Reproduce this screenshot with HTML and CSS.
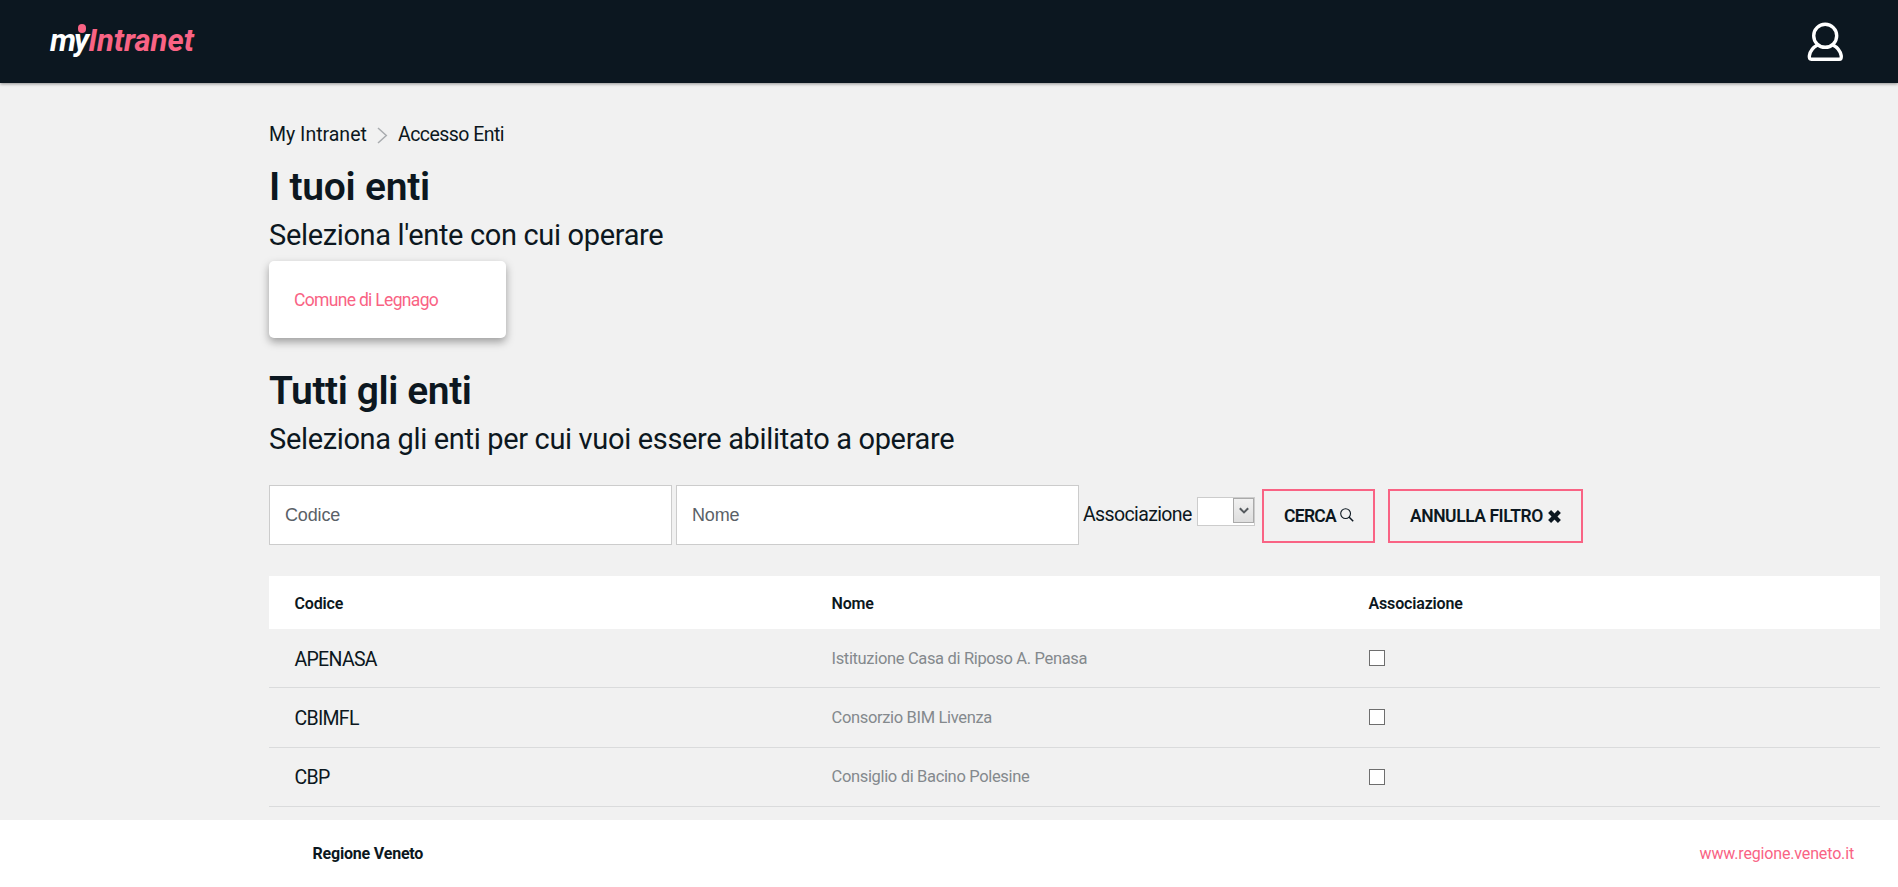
FILE: index.html
```
<!DOCTYPE html>
<html lang="it">
<head>
<meta charset="utf-8">
<title>MyIntranet - Accesso Enti</title>
<link rel="stylesheet" href="styles.css">
</head>
<body>
<header class="topbar">
  <a class="logo"><span class="logo-my">my</span><span class="logo-name">Intranet</span><i class="logo-dot"></i></a>
  <svg class="user-icon" width="38" height="42" viewBox="0 0 38 42" fill="none" stroke="#fff" stroke-width="3.4" stroke-linejoin="round">
    <circle cx="19.2" cy="15.8" r="11.5"/>
    <path d="M11.5 25C7.6 27 4.2 31 3.4 35.600C3 38 3.700 39.300 5.500 39.300H33.200C35 39.300 35.600 38 35.200 35.600C34.300 31 30.900 27 26.900 25"/>
  </svg>
</header>

<main class="content">
  <nav class="breadcrumb">
    <span class="crumb-home">My Intranet</span>
    <svg width="11" height="17" viewBox="0 0 11 17" fill="none" stroke="#a9acaf" stroke-width="1.5"><path d="M1 1L9.300 8.500L1 16"/></svg>
    <span class="crumb-page">Accesso Enti</span>
  </nav>

  <h1 class="title title-mine">I tuoi enti</h1>
  <p class="subtitle">Seleziona l'ente con cui operare</p>
  <a class="ente-card">Comune di Legnago</a>

  <h1 class="title title-all">Tutti gli enti</h1>
  <p class="subtitle subtitle-all">Seleziona gli enti per cui vuoi essere abilitato a operare</p>

  <form class="filters">
    <input class="field" type="text" placeholder="Codice">
    <input class="field" type="text" placeholder="Nome">
    <label class="assoc-label">Associazione</label>
    <span class="select"><span class="select-btn"><svg width="10" height="8" viewBox="0 0 10 8" fill="none" stroke="#555a5e" stroke-width="2"><path d="M.8 1.200L5 5.400L9.200 1.200"/></svg></span></span>
    <button class="btn btn-search" type="button">CERCA<svg width="14" height="14" viewBox="0 0 14 14" fill="none" stroke="#0c1720"><circle cx="5.600" cy="5.600" r="4.900" stroke-width="1.100"/><path d="M9.200 9.200L13.200 13.200" stroke-width="1.500"/></svg></button>
    <button class="btn btn-reset" type="button">ANNULLA FILTRO<svg width="13" height="13" viewBox="0 0 13 13" stroke="#0c1720" stroke-width="4.200"><path d="M1.600 1.600L11.400 11.400M11.400 1.600L1.600 11.400"/></svg></button>
  </form>

  <section class="table">
    <div class="row head"><span>Codice</span><span>Nome</span><span>Associazione</span></div>
    <div class="row"><span class="code">APENASA</span><span class="name">Istituzione Casa di Riposo A. Penasa</span><span><i class="check"></i></span></div>
    <div class="row"><span class="code">CBIMFL</span><span class="name">Consorzio BIM Livenza</span><span><i class="check"></i></span></div>
    <div class="row"><span class="code">CBP</span><span class="name">Consiglio di Bacino Polesine</span><span><i class="check"></i></span></div>
  </section>
</main>

<footer class="footer">
  <strong>Regione Veneto</strong>
  <a class="site-link">www.regione.veneto.it</a>
</footer>
</body>
</html>
```
FILE: styles.css
```
* { box-sizing: border-box; }

body {
  margin: 0;
  height: 100vh;
  overflow: hidden;
  display: flex;
  flex-direction: column;
  background: #f1f1f1;
  color: #0c1720;
  font-family: Roboto, "Open Sans", sans-serif;
}

.topbar {
  flex: none;
  height: 83px;
  padding: 0 54px 0 50px;
  display: flex;
  justify-content: space-between;
  background: #0c1720;
  box-shadow: 0 1px 3px rgba(0, 0, 0, .4);
}

.logo {
  position: relative;
  margin-top: 21px;
  height: 40px;
  line-height: 40px;
  font-size: 31px;
  font-weight: 700;
  font-style: italic;
  white-space: nowrap;
}
.logo-my { color: #fff; letter-spacing: -2px; margin-right: 1px; }
.logo-name { color: #f96384; }
.logo-dot {
  position: absolute;
  left: 27.5px;
  top: 3px;
  width: 8.5px;
  height: 8.5px;
  border-radius: 50%;
  background: #f96384;
}
.user-icon { margin-top: 20px; }

.content {
  flex: 1;
  min-height: 0;
  padding: 36px 18px 0 269px;
}

.breadcrumb {
  display: flex;
  align-items: center;
  height: 30px;
  font-size: 19.5px;
}
.breadcrumb svg { margin: 3px 10px 0 9px; }
.crumb-home { width: 99px; }
.crumb-page { letter-spacing: -.55px; }

.title {
  margin: 18px 0 0;
  font-size: 39px;
  line-height: 40px;
  font-weight: 600;
  letter-spacing: -.25px;
}
.title-all { margin-top: 33px; letter-spacing: -.42px; }

.subtitle {
  margin: 9px 0 0;
  font-size: 29px;
  line-height: 38px;
  letter-spacing: -.34px;
}

.ente-card {
  display: flex;
  align-items: center;
  width: 237px;
  height: 77px;
  margin-top: 7px;
  padding-left: 25px;
  border-radius: 5px;
  background: #fff;
  color: #f96384;
  font-size: 17.5px;
  letter-spacing: -.68px;
  box-shadow: 0 4px 8px rgba(0, 0, 0, .35);
}

.filters {
  display: flex;
  align-items: center;
  height: 60px;
  margin-top: 27px;
}
.field {
  width: 403px;
  height: 60px;
  margin-right: 4px;
  padding: 0 15px;
  border: 1px solid #ccc;
  border-radius: 0;
  background: #fff;
  font-family: "Liberation Sans", Arial, sans-serif;
  font-size: 18px;
}
.field::placeholder { color: #5a6167; opacity: 1; letter-spacing: -.15px; }
.assoc-label { width: 114px; margin-bottom: 1px; font-size: 19.5px; letter-spacing: -.62px; }
.select {
  display: flex;
  justify-content: flex-end;
  width: 58px;
  height: 29px;
  margin: 0 7px 7px 0;
  border: 1px solid #ccc;
  background: #fff;
}
.select-btn {
  display: grid;
  place-items: center;
  width: 21px;
  height: 25px;
  border: 1px solid #aaa;
  background: linear-gradient(#f1f1f1, #dedede);
}
.btn {
  display: flex;
  align-items: center;
  height: 54px;
  margin: 2px 13px 0 0;
  padding: 0 20px;
  border: 2px solid #f96384;
  background: transparent;
  color: #0c1720;
  font-family: inherit;
  font-size: 17.5px;
  font-weight: 600;
  letter-spacing: -.45px;
  white-space: nowrap;
}
.btn-search { width: 113px; letter-spacing: -.7px; }
.btn-search svg { margin: 0 0 3px 4px; flex: none; }
.btn-reset { width: 195px; }
.btn-reset svg { margin: 1px 0 0 5px; flex: none; }

.table { margin-top: 31px; }
.row {
  display: grid;
  grid-template-columns: repeat(3, 1fr);
  align-items: center;
  height: 59.33px;
  border-bottom: 1px solid #dadbdc;
}
.row > span { padding-left: 25.5px; }
.head {
  height: 53px;
  padding-top: 1px;
  border: 0;
  background: #fff;
  font-size: 16px;
  font-weight: 600;
  letter-spacing: -.16px;
}
.code { padding-top: 2px; font-size: 19.5px; letter-spacing: -.7px; }
.name { color: #84898d; font-size: 16.5px; letter-spacing: -.34px; }
.check {
  display: block;
  width: 16px;
  height: 16px;
  border: 1px solid #6e6e6e;
  background: #fff;
}

.footer {
  flex: none;
  display: flex;
  justify-content: space-between;
  align-items: center;
  height: 67px;
  padding: 0 44px 0 312.5px;
  background: #fff;
  font-size: 16px;
  letter-spacing: -.2px;
}
.site-link { color: #f96384; letter-spacing: -.15px; }
```
